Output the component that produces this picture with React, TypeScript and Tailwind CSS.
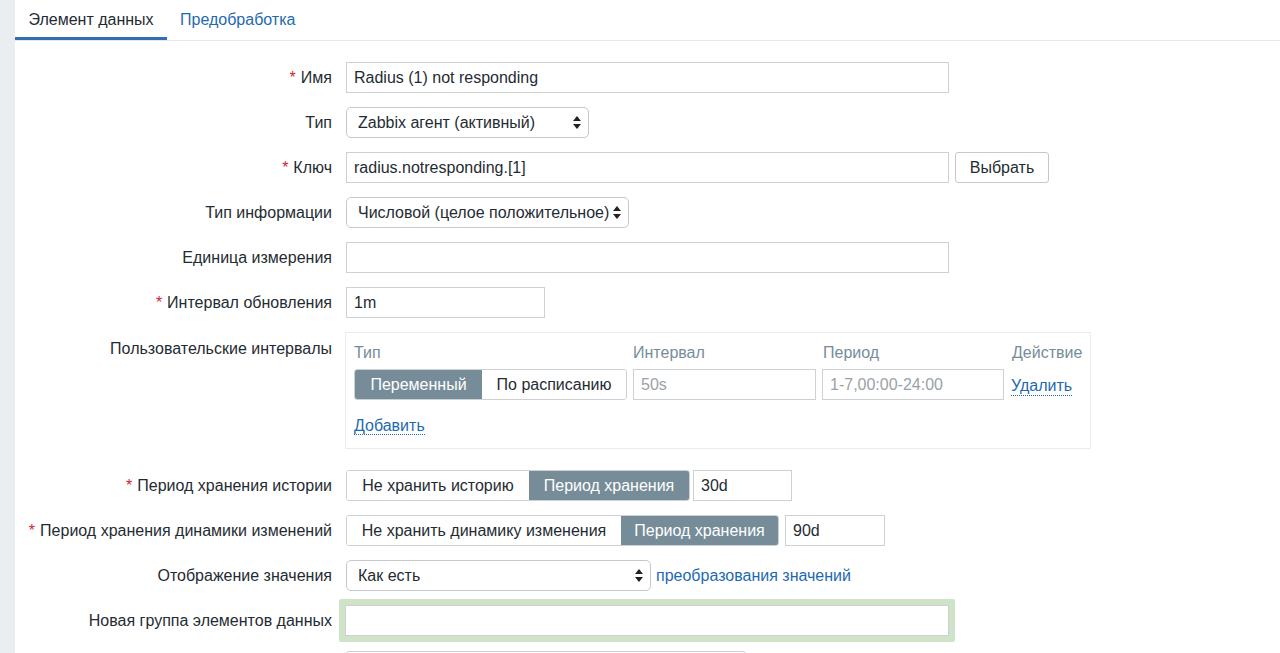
import React from 'react';

const font = { fontFamily: '"Liberation Sans", Arial, sans-serif' };

function Arrows() {
  return (
    <svg width="8" height="13" viewBox="0 0 8 13" className="shrink-0">
      <path d="M4 0 L8 5 L0 5 Z" fill="#222" />
      <path d="M0 8 L8 8 L4 13 Z" fill="#222" />
    </svg>
  );
}

function Select({ value, width }: { value: string; width: string }) {
  return (
    <div
      className={`${width} h-[31px] flex items-center justify-between pl-[11px] pr-[7px] border border-[#c4c8cc] rounded-[5px] bg-white text-[16px] text-[#1f2c33]`}
    >
      <span className="whitespace-nowrap">{value}</span>
      <Arrows />
    </div>
  );
}

function Input({ value, width, placeholder }: { value?: string; width: string; placeholder?: string }) {
  return (
    <div className={`${width} h-[31px] flex items-center px-[7px] border border-[#cdd1d4] bg-white text-[16px]`}>
      {value ? (
        <span className="text-[#1f2c33] whitespace-nowrap">{value}</span>
      ) : (
        <span className="text-[#9aa2a8] whitespace-nowrap">{placeholder}</span>
      )}
    </div>
  );
}

function Segmented({ items, active }: { items: { label: string; w: string }[]; active: number }) {
  return (
    <div className="flex h-[31px] border border-[#cdd1d4] rounded-[3px] overflow-hidden">
      {items.map((it, i) => (
        <div
          key={i}
          className={`${it.w} flex items-center justify-center text-[16px] whitespace-nowrap ${
            i === active ? 'bg-[#768d99] text-white' : 'bg-white text-[#1f2c33]'
          }`}
        >
          {it.label}
        </div>
      ))}
    </div>
  );
}

function Row({ label, required, children, top }: { label: string; required?: boolean; children: React.ReactNode; top?: boolean }) {
  return (
    <div className={`flex ${top ? 'items-start' : 'items-center'} gap-[14px]`}>
      <div className={`w-[317px] text-right text-[16px] text-[#1f2c33] whitespace-nowrap ${top ? 'pt-[5px]' : ''}`}>
        {required && <span className="text-[#d2252f] mr-[5px]">*</span>}
        {label}
      </div>
      <div className="flex items-center gap-[6px]">{children}</div>
    </div>
  );
}

export default function App() {
  return (
    <div className="min-h-screen bg-[#ebeef0] pl-[15px]" style={font}>
      <div className="bg-white min-h-[653px]">
        <div className="flex h-[41px] border-b border-[#e8e8e8] text-[16px]">
          <div className="w-[152px] flex items-center justify-center text-[#1f2c33] border-b-[3px] border-[#2f6fb3] pt-[3px]">
            Элемент данных
          </div>
          <div className="px-[13px] flex items-center text-[#1f6aaf]">Предобработка</div>
        </div>

        <div className="flex flex-col pt-[21px]">
          <Row label="Имя" required>
            <Input width="w-[603px]" value="Radius (1) not responding" />
          </Row>
          <div className="h-[14px]" />
          <Row label="Тип">
            <Select width="w-[243px]" value="Zabbix агент (активный)" />
          </Row>
          <div className="h-[14px]" />
          <Row label="Ключ" required>
            <Input width="w-[603px]" value="radius.notresponding.[1]" />
            <div className="w-[94px] h-[31px] flex items-center justify-center border border-[#c4c8cc] rounded-[3px] bg-white text-[16px] text-[#1f2c33]">
              Выбрать
            </div>
          </Row>
          <div className="h-[14px]" />
          <Row label="Тип информации">
            <Select width="w-[283px]" value="Числовой (целое положительное)" />
          </Row>
          <div className="h-[14px]" />
          <Row label="Единица измерения">
            <Input width="w-[603px]" />
          </Row>
          <div className="h-[14px]" />
          <Row label="Интервал обновления" required>
            <Input width="w-[199px]" value="1m" />
          </Row>
          <div className="h-[14px]" />
          <Row label="Пользовательские интервалы" top>
            <div className="-ml-[1px] w-[746px] h-[117px] border border-[#ebebeb] pl-[8px] pt-[8px]">
              <div className="flex text-[16px] text-[#768d99] h-[20px]">
                <div className="w-[279px]">Тип</div>
                <div className="w-[190px]">Интервал</div>
                <div className="w-[189px]">Период</div>
                <div>Действие</div>
              </div>
              <div className="flex items-center mt-[8px]">
                <Segmented
                  active={0}
                  items={[
                    { label: 'Переменный', w: 'w-[127px]' },
                    { label: 'По расписанию', w: 'w-[144px]' },
                  ]}
                />
                <div className="ml-[6px]">
                  <Input width="w-[183px]" placeholder="50s" />
                </div>
                <div className="ml-[6px]">
                  <Input width="w-[182px]" placeholder="1-7,00:00-24:00" />
                </div>
                <span className="ml-[7px] mt-[4px] text-[16px] text-[#1f6aaf] border-b border-dotted border-[#1f6aaf] leading-[18px]">
                  Удалить
                </span>
              </div>
              <div className="mt-[14px]">
                <span className="text-[16px] text-[#1f6aaf] border-b border-dotted border-[#1f6aaf] leading-[18px]">
                  Добавить
                </span>
              </div>
            </div>
          </Row>
          <div className="h-[21px]" />
          <Row label="Период хранения истории" required>
            <Segmented
              active={1}
              items={[
                { label: 'Не хранить историю', w: 'w-[182px]' },
                { label: 'Период хранения', w: 'w-[160px]' },
              ]}
            />
            <div className="-ml-[3px]">
              <Input width="w-[99px]" value="30d" />
            </div>
          </Row>
          <div className="h-[14px]" />
          <Row label="Период хранения динамики изменений" required>
            <Segmented
              active={1}
              items={[
                { label: 'Не хранить динамику изменения', w: 'w-[274px]' },
                { label: 'Период хранения', w: 'w-[157px]' },
              ]}
            />
            <div className="ml-0">
              <Input width="w-[100px]" value="90d" />
            </div>
          </Row>
          <div className="h-[14px]" />
          <Row label="Отображение значения">
            <Select width="w-[305px]" value="Как есть" />
            <span className="-ml-[1px] text-[16px] text-[#1f6aaf]">преобразования значений</span>
          </Row>
          <div className="h-[8px]" />
          <Row label="Новая группа элементов данных">
            <div className="-ml-[7px] bg-[#cfe3c9] px-[6px] py-[6px] rounded-[2px]">
              <Input width="w-[604px]" />
            </div>
          </Row>
          <div className="h-[9px]" />
          <Row label="">
            <div className="w-[400px] h-[31px] border border-[#cdd1d4] rounded-[3px]" />
          </Row>
        </div>
      </div>
    </div>
  );
}
